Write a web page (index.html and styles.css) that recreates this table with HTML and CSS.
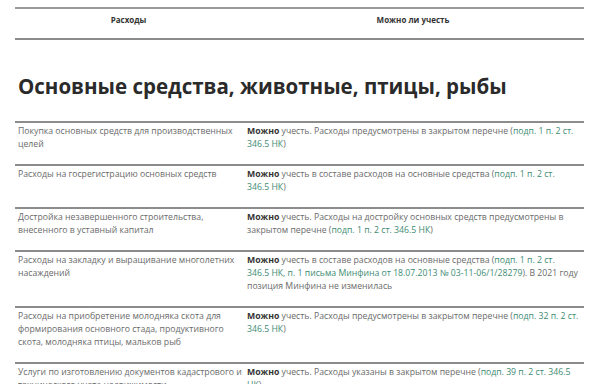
FILE: index.html
```html
<!DOCTYPE html>
<html lang="ru">
<head>
<meta charset="utf-8">
<link rel="stylesheet" href="styles.css">
</head>
<body>
<div class="page">
  <div class="thead">
    <div class="th">Расходы</div>
    <div class="th">Можно ли учесть</div>
  </div>
  <h2 class="section-title">Основные средства, животные, птицы, рыбы</h2>
  <div class="tbody">
    <div class="row">
      <div class="cell">Покупка основных средств для производственных целей</div>
      <div class="cell cell-r"><b>Можно</b> учесть. Расходы предусмотрены в закрытом перечне (<span class="link">подп. 1 п. 2 ст. 346.5 НК</span>)</div>
    </div>
    <div class="row">
      <div class="cell">Расходы на госрегистрацию основных средств</div>
      <div class="cell cell-r"><b>Можно</b> учесть в составе расходов на основные средства (<span class="link">подп. 1 п. 2 ст. 346.5 НК</span>)</div>
    </div>
    <div class="row">
      <div class="cell">Достройка незавершенного строительства, внесенного в уставный капитал</div>
      <div class="cell cell-r"><b>Можно</b> учесть. Расходы на достройку основных средств предусмотрены в закрытом перечне (<span class="link">подп. 1 п. 2 ст. 346.5 НК</span>)</div>
    </div>
    <div class="row">
      <div class="cell">Расходы на закладку и выращивание многолетних насаждений</div>
      <div class="cell cell-r"><b>Можно</b> учесть в составе расходов на основные средства (<span class="link">подп. 1 п. 2 ст. 346.5 НК, п. 1 письма Минфина от 18.07.2013 № 03-11-06/1/28279</span>). В 2021 году позиция Минфина не изменилась</div>
    </div>
    <div class="row">
      <div class="cell">Расходы на приобретение молодняка скота для формирования основного стада, продуктивного скота, молодняка птицы, мальков рыб</div>
      <div class="cell cell-r"><b>Можно</b> учесть. Расходы предусмотрены в закрытом перечне (<span class="link">подп. 32 п. 2 ст. 346.5 НК</span>)</div>
    </div>
    <div class="row">
      <div class="cell">Услуги по изготовлению документов кадастрового и технического учета недвижимости</div>
      <div class="cell cell-r"><b>Можно</b> учесть. Расходы указаны в закрытом перечне (<span class="link">подп. 39 п. 2 ст. 346.5 НК</span>)</div>
    </div>
  </div>
</div>
</body>
</html>
```

FILE: styles.css
```css
html, body {
  margin: 0;
  padding: 0;
  background: #ffffff;
}
body {
  font-family: "Open Sans", "Liberation Sans", sans-serif;
  color: #6a6a6a;
}
.page {
  padding: 7px 14px 0 15px;
}
.thead {
  display: grid;
  grid-template-columns: 227px 1fr;
  border-top: 2px solid #9a9a9a;
  border-bottom: 2px solid #8c8c8c;
  height: 29px;
}
.th {
  text-align: center;
  font-size: 8px;
  font-weight: 700;
  color: #333333;
  padding-top: 5px;
}
.section-title {
  margin: 0;
  padding: 32px 0 21px 3px;
  font-size: 20.5px;
  line-height: 28px;
  font-weight: 700;
  color: #2a2a2a;
}
.row {
  display: grid;
  grid-template-columns: 227px 1fr;
  border-top: 2px solid #8c8c8c;
}
.cell {
  font-size: 8.7px;
  line-height: 13px;
  padding: 2px 0 13px 3px;
}
.cell-r {
  padding-left: 5px;
  padding-right: 5px;
}
.cell b {
  color: #333333;
  font-weight: 700;
}
.link {
  color: #3e8b73;
}
```
